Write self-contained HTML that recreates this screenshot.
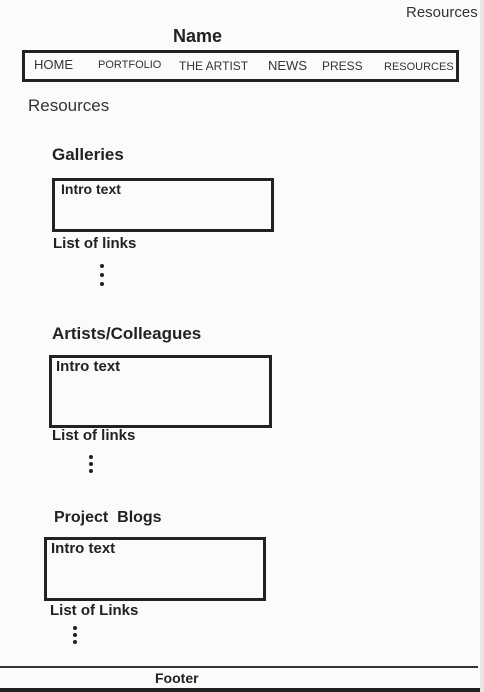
<!DOCTYPE html>
<html><head><meta charset="utf-8"><style>
html,body{margin:0;padding:0;}
body{width:484px;height:692px;background:#fbfbfb;position:relative;overflow:hidden;font-family:"Liberation Sans",sans-serif;color:#222;}
.a{position:absolute;white-space:nowrap;}
.b{font-weight:bold;}
.box{position:absolute;border:3px solid #222;box-sizing:border-box;}
.dot{position:absolute;width:4px;height:4px;border-radius:50%;background:#222;}
</style></head><body>
<div class="a" style="left:406px;top:4px;font-size:15px;color:#333">Resources</div>
<div class="a b" style="left:173px;top:26px;font-size:18px">Name</div>
<div class="box" style="left:22px;top:50px;width:437px;height:32px"></div>
<div class="a" style="left:34px;top:57px;font-size:13px;color:#333">HOME</div>
<div class="a" style="left:98px;top:59px;font-size:11px;color:#333">PORTFOLIO</div>
<div class="a" style="left:179px;top:59px;font-size:12px;color:#333">THE ARTIST</div>
<div class="a" style="left:268px;top:58px;font-size:13px;color:#333">NEWS</div>
<div class="a" style="left:322px;top:59px;font-size:12px;color:#333">PRESS</div>
<div class="a" style="left:384px;top:61px;font-size:11px;color:#333">RESOURCES</div>
<div class="a" style="left:28px;top:96px;font-size:17px;color:#333">Resources</div>

<div class="a b" style="left:52px;top:145px;font-size:17px">Galleries</div>
<div class="box" style="left:52px;top:178px;width:222px;height:54px"></div>
<div class="a b" style="left:61px;top:181px;font-size:14px">Intro text</div>
<div class="a b" style="left:53px;top:235px;font-size:15px">List of links</div>
<div class="dot" style="left:100px;top:264px"></div><div class="dot" style="left:100px;top:273px"></div><div class="dot" style="left:100px;top:282px"></div>

<div class="a b" style="left:52px;top:324px;font-size:17px">Artists/Colleagues</div>
<div class="box" style="left:49px;top:355px;width:223px;height:73px"></div>
<div class="a b" style="left:56px;top:358px;font-size:15px">Intro text</div>
<div class="a b" style="left:52px;top:427px;font-size:15px">List of links</div>
<div class="dot" style="left:89px;top:455px"></div><div class="dot" style="left:89px;top:462px"></div><div class="dot" style="left:89px;top:469px"></div>

<div class="a b" style="left:54px;top:509px;font-size:16px">Project&nbsp; Blogs</div>
<div class="box" style="left:44px;top:537px;width:222px;height:64px"></div>
<div class="a b" style="left:51px;top:540px;font-size:15px">Intro text</div>
<div class="a b" style="left:50px;top:602px;font-size:15px">List of Links</div>
<div class="dot" style="left:73px;top:626px"></div><div class="dot" style="left:73px;top:633px"></div><div class="dot" style="left:73px;top:640px"></div>

<div style="position:absolute;left:0;top:666px;width:478px;height:2px;background:#333"></div>
<div class="a b" style="left:155px;top:670px;font-size:14px">Footer</div>
<div style="position:absolute;left:0;top:688px;width:484px;height:4px;background:#222"></div>
<div style="position:absolute;left:480px;top:0;width:4px;height:692px;background:#e6e6e6"></div>
</body></html>
